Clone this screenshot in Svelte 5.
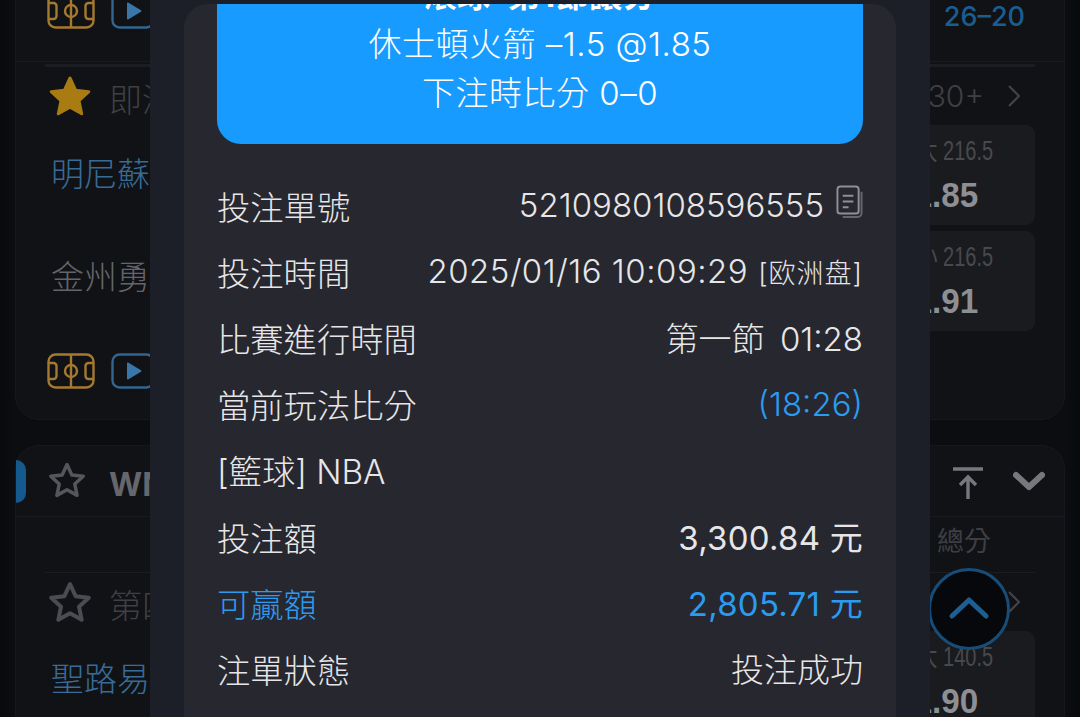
<script>
  const rows = [
    { label: '投注單號', value: '5210980108596555', copy: true },
    { label: '投注時間', value: '2025/01/16 10:09:29', note: '[欧洲盘]' },
    { label: '比賽進行時間', value: '第一節\u2009 01:28' },
    { label: '當前玩法比分', value: '(18:26)', valueBlue: true },
    { label: '[籃球] NBA', value: '' },
    { label: '投注額', value: '3,300.84 元', strong: true },
    { label: '可贏額', value: '2,805.71 元', blue: true, strong: true },
    { label: '注單狀態', value: '投注成功' }
  ];

  const star = 'M23 4l5.6 12.2 13.2 1.5-9.8 9 2.7 13.1L23 33.2l-11.7 6.6L14 26.7l-9.8-9 13.2-1.5z';
</script>

{#snippet courtIcon()}
  <svg class="court" viewBox="0 0 48 36" fill="none" stroke="#a57a2f" stroke-width="2.4">
    <rect x="1.5" y="1.5" width="45" height="33" rx="7" />
    <path d="M24 1.5v33M1.5 10h5a3 3 0 0 1 3 3v10a3 3 0 0 1-3 3h-5M46.5 10h-5a3 3 0 0 0-3 3v10a3 3 0 0 0 3 3h5" />
    <circle cx="24" cy="18" r="6" />
  </svg>
{/snippet}

{#snippet playIcon()}
  <svg class="play" viewBox="0 0 44 36" fill="none">
    <rect x="1.5" y="1.5" width="41" height="33" rx="7" stroke="#33658f" stroke-width="2.4" />
    <path d="M16 10.5v15a1 1 0 0 0 1.5.8l12.5-7.5a1 1 0 0 0 0-1.6L17.5 9.700a1 1 0 0 0-1.500.8z" fill="#3a77a8" />
  </svg>
{/snippet}

{#snippet oddsBox(line, price)}
  <div class="odds">
    <span class="odds-line">{line}</span>
    <span class="odds-price">{price}</span>
  </div>
{/snippet}

<div class="page">
  <div class="card first">
    <div class="top-row">
      <div class="icons">
        {@render courtIcon()}
        {@render playIcon()}
      </div>
      <span class="score">26–20</span>
    </div>
    <div class="market">
      <div class="market-head">
        <svg class="star" viewBox="0 0 46 44"><path d={star} fill="#a87c12" stroke="#a87c12" stroke-width="3" stroke-linejoin="round" /></svg>
        <span class="market-name">即滾球</span>
        <span class="more">30+</span>
        <svg class="chev-right" viewBox="0 0 14 24" fill="none" stroke="#44454a" stroke-width="2"><path d="M2 2l10 10L2 22" /></svg>
      </div>
      <div class="match">
        <div class="teams">
          <span class="team blue">明尼蘇達灰狼</span>
          <span class="team">金州勇士</span>
        </div>
        <div class="odds-col">
          {@render oddsBox('大 216.5', '1.85')}
          {@render oddsBox('小 216.5', '1.91')}
        </div>
      </div>
      <div class="icons lower">
        {@render courtIcon()}
        {@render playIcon()}
      </div>
    </div>
  </div>

  <div class="card second">
    <div class="league">
      <span class="tab"></span>
      <svg class="star outline" viewBox="0 0 46 44"><path d={star} fill="none" stroke="#55565b" stroke-width="4" stroke-linejoin="round" /></svg>
      <span class="league-name">WNBA</span>
      <svg class="to-top" viewBox="0 0 30 32" fill="none" stroke="#77787d" stroke-width="3.4"><path d="M0 2h30M15 32V11M7 18l8-8 8 8" /></svg>
      <svg class="chev-down" viewBox="0 0 32 20" fill="none" stroke="#77787d" stroke-width="6" stroke-linecap="round" stroke-linejoin="round"><path d="M3 4l13 12L29 4" /></svg>
    </div>
    <div class="columns"><span>總分</span></div>
    <div class="market second-market">
      <div class="market-head">
        <svg class="star outline2" viewBox="0 0 46 44"><path d={star} fill="none" stroke="#4b4c51" stroke-width="4" stroke-linejoin="round" /></svg>
        <span class="market-name">第四節</span>
        <svg class="chev-right" viewBox="0 0 14 24" fill="none" stroke="#44454a" stroke-width="2"><path d="M2 2l10 10L2 22" /></svg>
      </div>
      <div class="match">
        <div class="teams">
          <span class="team blue">聖路易斯</span>
        </div>
        <div class="odds-col">
          {@render oddsBox('大 140.5', '1.90')}
        </div>
      </div>
    </div>
  </div>

  <button class="scroll-up" aria-label="Back to top">
    <svg viewBox="0 0 42 26" fill="none" stroke="#1d5f93" stroke-width="5" stroke-linecap="round" stroke-linejoin="round"><path d="M4 22L21 6l17 16" /></svg>
  </button>

  <div class="sheet">
    <div class="panel">
      <div class="ticket">
        <div class="ticket-text">
          <div class="ticket-title">滾球&nbsp;&nbsp;第1節讓分</div>
          <div>休士頓火箭 –1.5 @1.85</div>
          <div>下注時比分 0–0</div>
        </div>
      </div>
      <div class="rows">
        {#each rows as row}
          <div class="row" class:blue-row={row.blue}>
            <span class="row-label">{row.label}</span>
            <span class="row-value" class:blue-text={row.valueBlue} class:strong={row.strong}>
              <span class:spaced={row.note}>{row.value}</span>
              {#if row.note}<span class="note">{row.note}</span>{/if}
              {#if row.copy}
                <svg class="copy" viewBox="0 0 28 34" fill="none" stroke="#8f8f95" stroke-width="2">
                  <rect x="1.500" y="1.500" width="22" height="28" rx="3" />
                  <path d="M7 11h11M7 17h11M7 23h6" />
                  <path d="M26.500 7v22a4 4 0 0 1-4 4H7" stroke="#66666c" />
                </svg>
              {/if}
            </span>
          </div>
        {/each}
      </div>
    </div>
  </div>
</div>

<style>
  :global(body) {
    margin: 0;
    background: #0b0c10;
    font-family: Inter, "Noto Sans CJK TC", sans-serif;
  }

  .page {
    position: relative;
    width: 1080px;
    height: 717px;
    overflow: hidden;
    background: linear-gradient(90deg, #08090c 0, #0c0d11 14px, #0c0d11 1066px, #08090c 100%);
  }

  .card {
    box-sizing: border-box;
    margin: 0 15px;
    background: #111216;
    border: 1px solid #17181d;
    border-radius: 24px;
  }

  .first {
    height: 460px;
    margin-top: -40px;
    margin-bottom: 25px;
  }

  .top-row {
    display: flex;
    justify-content: space-between;
    align-items: flex-start;
    height: 101px;
    padding: 0 39px 0 31px;
    box-sizing: border-box;
    border-bottom: 1px solid #1a1b20;
  }

  .icons {
    display: flex;
    align-items: center;
    gap: 16px;
    padding-top: 32px;
  }

  .court {
    width: 48px;
    height: 36px;
  }

  .play {
    width: 44px;
    height: 36px;
  }

  .score {
    padding-top: 40px;
    color: #1a5d8f;
    font-size: 27px;
    line-height: 32px;
    font-weight: 500;
  }

  .market {
    margin: 2px 29px 0;
    border-top: 3px solid #1c1d22;
  }

  .market-head {
    display: flex;
    align-items: center;
    height: 58px;
    color: #3f4045;
    font-size: 33px;
  }

  .star {
    width: 46px;
    height: 44px;
    flex: none;
    margin-left: 2px;
  }

  .market-name {
    margin-left: 16px;
    flex: 1;
    padding-top: 4px;
    font-weight: 300;
  }

  .more {
    margin-right: 23px;
    font-size: 30px;
    font-weight: 300;
  }

  .chev-right {
    width: 14px;
    height: 24px;
    margin-right: 14px;
  }

  .match {
    display: flex;
    justify-content: space-between;
  }

  .teams {
    display: flex;
    flex-direction: column;
    gap: 58px;
    padding: 27px 0 0 6px;
  }

  .team {
    color: #64656a;
    font-size: 33px;
    line-height: 45px;
    font-weight: 300;
  }

  .team.blue {
    color: #386c98;
  }

  .odds-col {
    display: flex;
    flex-direction: column;
    gap: 6px;
    padding-top: 3px;
    margin-top: -3px;
  }

  .odds {
    display: flex;
    flex-direction: column;
    align-items: flex-end;
    box-sizing: border-box;
    width: 200px;
    height: 100px;
    padding: 10px 42px 0 0;
    background: #1a1b1f;
    border-radius: 9px;
  }

  /* no condensed face is installed, so the numbers are narrowed by hand */
  .odds-line {
    color: #48494e;
    font-family: "Liberation Sans", "Noto Sans CJK TC", sans-serif;
    font-size: 27px;
    line-height: 32px;
    transform: scaleX(0.74);
    transform-origin: right center;
  }

  .odds-price {
    margin-top: 8px;
    margin-right: 15px;
    color: #8e8f94;
    font-family: "Liberation Sans", sans-serif;
    font-size: 35px;
    line-height: 40px;
    font-weight: 700;
    transform: scaleX(0.95);
    transform-origin: right center;
  }

  .lower {
    padding: 22px 0 0 2px;
  }

  .second {
    height: 320px;
    border-bottom: 0;
  }

  .league {
    position: relative;
    display: flex;
    align-items: center;
    height: 70px;
    border-bottom: 1px solid #1a1b20;
  }

  .tab {
    position: absolute;
    left: 0;
    top: 14px;
    width: 10px;
    height: 43px;
    background: #155a8f;
    border-radius: 0 12px 12px 0;
  }

  .outline {
    width: 40px;
    height: 38px;
    margin-left: 31px;
    margin-bottom: 2px;
  }

  .league-name {
    flex: 1;
    margin-left: 22px;
    padding-top: 6px;
    color: #66676c;
    font-size: 32px;
    font-weight: 700;
  }

  .to-top {
    width: 30px;
    height: 32px;
    margin-right: 30px;
    margin-top: 4px;
  }

  .chev-down {
    width: 32px;
    height: 20px;
    margin-right: 19px;
  }

  .columns {
    display: flex;
    justify-content: flex-end;
    height: 55px;
    padding: 5px 73px 0 0;
    box-sizing: border-box;
    color: #3d3e43;
    font-size: 27px;
    line-height: 40px;
  }

  .second-market {
    margin-top: 0;
    border-top: 1px solid #1c1d22;
  }

  .second-market .market-head {
    height: 58px;
  }

  .outline2 {
    width: 46px;
    height: 44px;
    flex: none;
    margin-left: 2px;
  }

  .second-market .teams {
    padding-top: 26px;
  }

  /* sits under the sheet, its left edge touches it */
  .scroll-up {
    position: absolute;
    left: 928px;
    top: 568px;
    width: 82px;
    height: 82px;
    box-sizing: border-box;
    display: flex;
    align-items: center;
    justify-content: center;
    padding: 0 0 4px;
    background: #07080b;
    border: 3px solid #174d78;
    border-radius: 50%;
  }

  .scroll-up svg {
    width: 42px;
    height: 26px;
  }

  .sheet {
    position: absolute;
    left: 150px;
    top: 0;
    bottom: 0;
    width: 780px;
    background: #1d1f28;
    box-sizing: border-box;
    padding: 4px 34px 0;
  }

  .panel {
    height: 100%;
    background: #27272f;
    border-radius: 24px 24px 0 0;
    padding: 0 33px;
    box-sizing: border-box;
    color: #e6e6e8;
  }

  .ticket {
    height: 140px;
    overflow: hidden;
    background: #189bff;
    border-radius: 0 0 24px 24px;
    color: #fff;
    text-align: center;
    font-size: 33px;
    line-height: 49px;
    font-weight: 300;
    letter-spacing: 0.5px;
  }

  .ticket-text {
    margin-top: -33px;
  }

  .ticket-title {
    font-weight: 700;
  }

  .rows {
    padding-top: 28px;
  }

  .row {
    display: flex;
    justify-content: space-between;
    align-items: center;
    height: 66.2px;
    font-size: 33px;
    font-weight: 300;
  }

  .row-label {
    font-size: 33.3px;
  }

  .blue-row,
  .blue-text {
    color: #2b9bf0;
  }

  .row-value {
    display: flex;
    align-items: center;
    gap: 10px;
  }

  .strong {
    font-weight: 400;
    letter-spacing: 0.25px;
  }

  .spaced {
    letter-spacing: 0.5px;
  }

  .note {
    font-size: 27px;
    letter-spacing: 1px;
  }

  .copy {
    width: 27px;
    height: 33px;
    margin: -8px 0 0 2px;
  }
</style>
